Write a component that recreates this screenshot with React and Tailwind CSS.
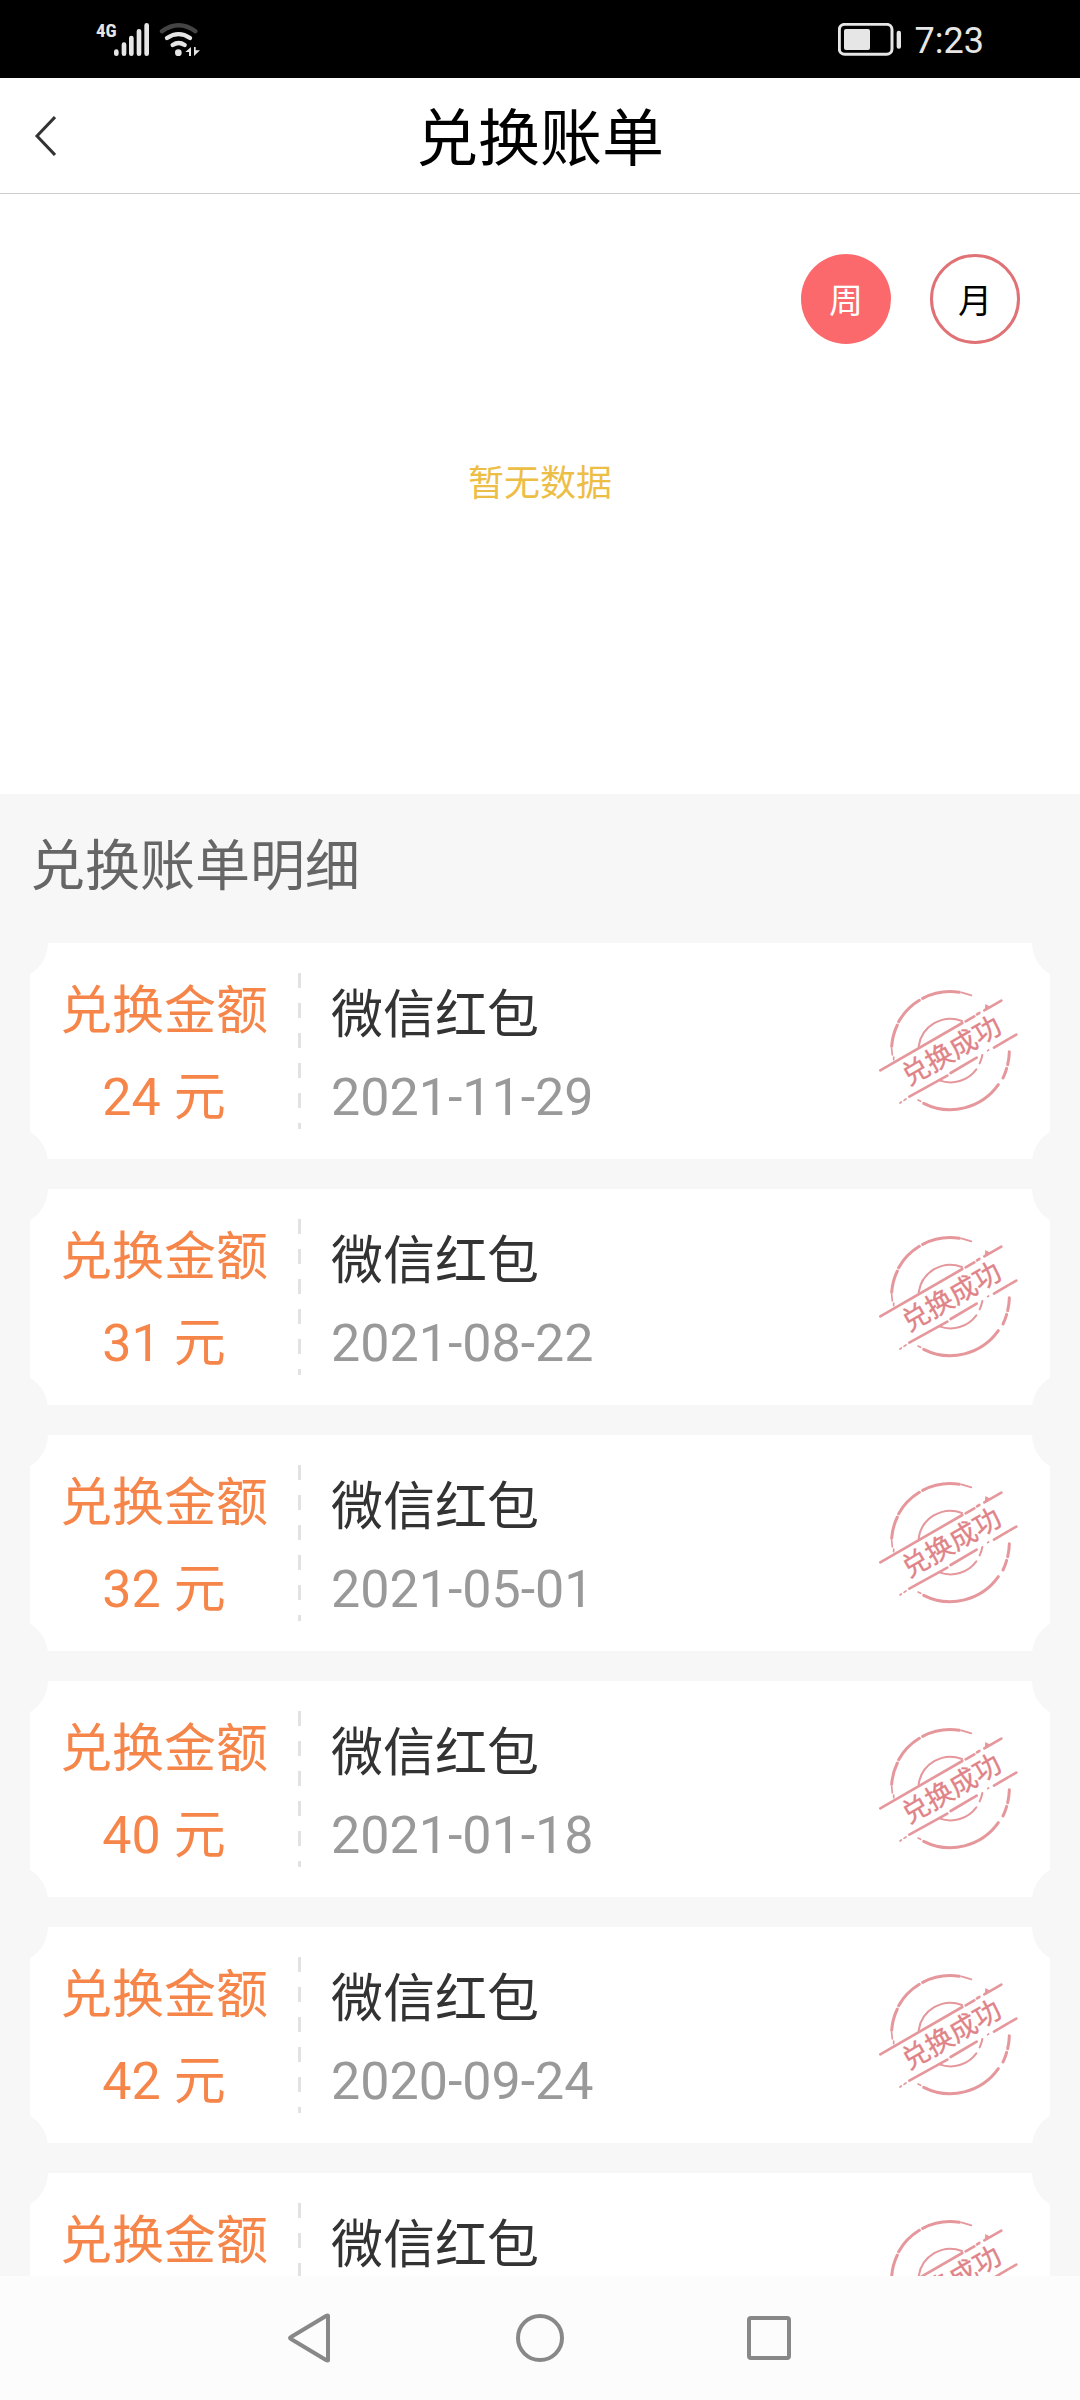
import { useState } from 'react'

const records = [
  { id: 1, amount: 24, name: '微信红包', date: '2021-11-29' },
  { id: 2, amount: 31, name: '微信红包', date: '2021-08-22' },
  { id: 3, amount: 32, name: '微信红包', date: '2021-05-01' },
  { id: 4, amount: 40, name: '微信红包', date: '2021-01-18' },
  { id: 5, amount: 42, name: '微信红包', date: '2020-09-24' },
  { id: 6, amount: null, name: '微信红包', date: null }
]

const periods = [
  { id: 'week', label: '周' },
  { id: 'month', label: '月' }
]

function StatusBar() {
  return (
    <div className="flex h-[78px] shrink-0 items-center justify-between bg-black px-24 text-[#e6e6e6]">
      <div className="flex items-start">
        <span className="w-[18px] font-['Liberation_Sans_Narrow','Roboto_Condensed',Roboto,sans-serif] text-[19px] font-bold leading-4">4G</span>
        <svg className="h-[33px] w-[87px]" viewBox="162 66 261 99" fill="none" stroke="#e6e6e6" strokeLinecap="round">
          <g strokeWidth="14">
            <path d="M169 152v6M192 131v27M214 111v47M237 91v67M260 73v85" />
          </g>
          <path d="M306 91Q356 55 406 91" stroke="#444" strokeWidth="13" />
          <path d="M321 111Q356 88 390 111" strokeWidth="13" />
          <path d="M338 132Q356 120 374 132" strokeWidth="13" />
          <circle cx="355" cy="155" r="10" fill="#e6e6e6" stroke="none" />
          <path d="M376 153l17-15v27h-6v-12zM402 165v-27h5v10h13z" fill="#e6e6e6" stroke="none" />
        </svg>
      </div>
      <div className="flex items-center gap-3.5">
        <svg className="h-[33px] w-[63px]" viewBox="54 69 189 99" fill="none">
          <rect x="58" y="73" width="158" height="90" rx="16" stroke="#e6e6e6" strokeWidth="9" />
          <rect x="72" y="87" width="78" height="63" rx="6" fill="#e6e6e6" />
          <rect x="230" y="92" width="13" height="54" rx="6" fill="#e6e6e6" />
        </svg>
        <span className="pt-1 text-[36px] leading-10">7:23</span>
      </div>
    </div>
  )
}

// Rubber stamp shown on every completed exchange
function SuccessStamp() {
  return (
    <svg className="h-[130px] w-[148px] shrink-0" viewBox="105 165 444 390" fill="none" stroke="#e5979c" strokeLinecap="round">
      <g strokeWidth="9">
        <path d="M155 346A177 177 0 0 1 172 282M176 272A177 177 0 0 1 238 208M248 202A177 177 0 0 1 358 184" />
        <path d="M508 362A177 177 0 0 1 503 401M500 412A177 177 0 0 1 489 441" />
        <path d="M475 461A177 177 0 0 1 251 517" />
      </g>
      <path d="M155 352l2 20M161 378v8M364 184l30 9M234 507l8 4" strokeWidth="5" />
      <path d="M236 346A96 96 0 0 1 366 270M427 372A96 96 0 0 1 419 397M409 415A96 96 0 0 1 298 448" strokeWidth="6" />
      <g strokeWidth="8">
        <path d="M121 418L367 276M377 271L403 256M411 250L418 246M433 238L484 209" />
        <path d="M208 497L322 434M332 426L410 380M462 350L504 325M509 322L529 311" />
        <path d="M180 516l4-3M192 508l6-4M443 359l3-2" strokeWidth="5" />
      </g>
      <path d="M436 219l18 10-20 10z" fill="#e5979c" stroke="none" />
      <text x="334" y="388" transform="rotate(-30 334 359)" textAnchor="middle" fontSize="82" fill="#e08388" stroke="#e08388" strokeWidth="1">
        兑换成功
      </text>
    </svg>
  )
}

function RecordCard({ amount, name, date }) {
  return (
    <li className="relative flex h-[216px] shrink-0 items-center overflow-hidden bg-white pr-[27px]">
      {/* Ticket notches */}
      <span className="absolute -left-[54px] -top-9 size-[72px] rounded-full bg-[#f7f7f7]" />
      <span className="absolute -right-[54px] -top-9 size-[72px] rounded-full bg-[#f7f7f7]" />
      <span className="absolute -bottom-10 -left-[54px] size-[72px] rounded-full bg-[#f7f7f7]" />
      <span className="absolute -bottom-10 -right-[54px] size-[72px] rounded-full bg-[#f7f7f7]" />

      <div className="w-[268px] shrink-0 self-start pt-[26px] text-center text-[52px] leading-[86px] text-[#f58549]">
        <p>兑换金额</p>
        {amount !== null && <p>{amount} 元</p>}
      </div>
      <div className="h-[156px] w-[3px] shrink-0 bg-[repeating-linear-gradient(to_bottom,#e2e2e2_0_15px,transparent_15px_30px)]" />
      <div className="flex-1 self-start pl-[30px] pt-8 text-[52px] leading-[82px]">
        <p className="text-[#333]">{name}</p>
        {date && <p className="text-[#999]">{date}</p>}
      </div>
      <SuccessStamp />
    </li>
  )
}

function NavBar() {
  return (
    <nav className="flex h-[124px] shrink-0 items-center justify-center gap-[180px] bg-[#fcfcfc]">
      <button type="button" aria-label="返回">
        <svg className="size-[50px]" viewBox="0 0 50 50" fill="none" stroke="#888" strokeWidth="4" strokeLinejoin="round">
          <path d="M43 3v44Q43 48 41 47L6 26Q4 25 6 24L41 3Q43 2 43 3z" />
        </svg>
      </button>
      <button type="button" aria-label="主页">
        <svg className="size-[50px]" viewBox="0 0 50 50" fill="none" stroke="#888" strokeWidth="4">
          <circle cx="25" cy="25" r="22" />
        </svg>
      </button>
      <button type="button" aria-label="最近任务">
        <svg className="size-[50px]" viewBox="0 0 50 50" fill="none" stroke="#888" strokeWidth="4">
          <rect x="4" y="5" width="40" height="40" rx="2" />
        </svg>
      </button>
    </nav>
  )
}

export default function App() {
  const [period, setPeriod] = useState('week')

  return (
    <div className="flex h-screen flex-col overflow-hidden bg-[#f7f7f7] font-['Roboto','Noto_Sans_CJK_SC',sans-serif]" lang="zh-CN">
      <StatusBar />

      <header className="grid h-[116px] shrink-0 grid-cols-[1fr_auto_1fr] items-center border-b border-[#ccc] bg-white">
        <button type="button" aria-label="返回" className="ml-[34px] w-fit">
          <svg className="h-10 w-[22px]" viewBox="0 0 22 40" fill="none" stroke="#333" strokeWidth="3">
            <path d="M21 1L3 20l18 19" />
          </svg>
        </button>
        <h1 className="pt-2 text-[62px] leading-[90px] text-black">兑换账单</h1>
      </header>

      <section className="h-[600px] shrink-0 bg-white pt-[60px]">
        <div className="flex justify-end gap-[39px] pr-[60px]">
          {periods.map((item) => (
            <button
              key={item.id}
              type="button"
              onClick={() => setPeriod(item.id)}
              className={`size-[90px] rounded-full pt-1 text-[34px] ${
                period === item.id ? 'bg-[#fb696c] text-white' : 'border-3 border-[#e07175] bg-white text-black'
              }`}
            >
              {item.label}
            </button>
          ))}
        </div>
        <p className="mt-[114px] text-center text-[36px] leading-[52px] text-[#edbe45]">暂无数据</p>
      </section>

      <main className="flex min-h-0 flex-1 flex-col overflow-hidden">
        <h2 className="shrink-0 px-[30px] pb-10 pt-9 text-[55px] leading-[73px] text-[#666]">兑换账单明细</h2>
        <ul className="flex flex-col gap-[30px] px-[30px]">
          {records.map((record) => (
            <RecordCard key={record.id} amount={record.amount} name={record.name} date={record.date} />
          ))}
        </ul>
      </main>

      <NavBar />
    </div>
  )
}
